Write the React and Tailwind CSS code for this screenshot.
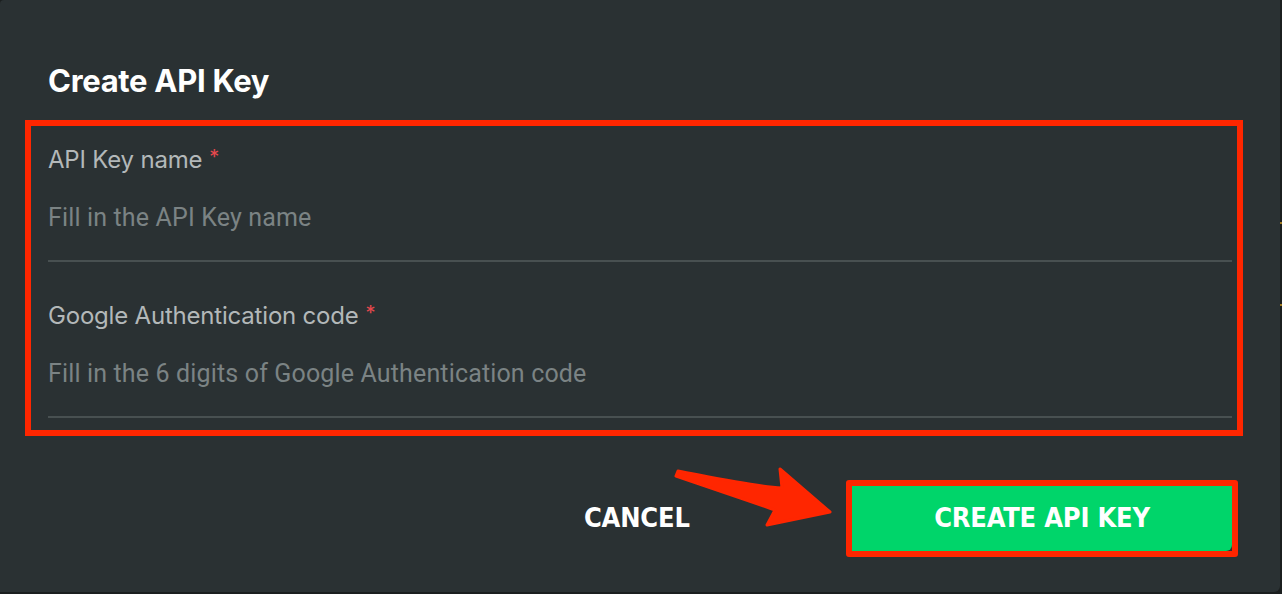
import React from 'react';

const Field = ({ label, placeholder, first }) => (
  <div className={first ? 'pt-[22px]' : 'pt-[42px]'}>
    <div className="flex h-[24px] items-center text-[24px] text-[#b3b8b9] font-['Inter',sans-serif] tracking-[-0.2px]">
      {label}
      <span className="ml-[7px] text-[#e5484d] text-[20px] self-start leading-[18px]">*</span>
    </div>
    <div className="mt-[34px] h-[24px] flex items-center text-[25px] text-[#7b8384] font-['Roboto',sans-serif] tracking-[0.15px]">
      {placeholder}
    </div>
    <div className="mt-[30px] h-[2px] bg-[#485051]" />
  </div>
);

const Arrow = () => (
  <svg width="170" height="70" viewBox="0 0 170 70" className="absolute left-[670px] top-[462px]">
    <path
      d="M8 9 C 40 15, 80 24, 112 26 L 110 7 L 160 50 L 97 63 L 105 48 C 70 36, 30 22, 6 14 Z"
      fill="#ff2600"
      stroke="#ff2600"
      strokeWidth="3"
      strokeLinejoin="round"
    />
  </svg>
);

export default function App() {
  return (
    <div className="w-[1282px] h-[594px] bg-[#1b1f1f] overflow-hidden relative">
      <div className="w-[1280px] h-[592px] bg-[#2a3133] rounded-br-[6px] rounded-tl-[4px] flex flex-col">
        <h1 className="mt-[63px] ml-[48px] h-[36px] flex items-center text-[31px] font-bold text-white font-['Inter',sans-serif] tracking-[-0.3px]">
          Create API Key
        </h1>

        <div className="mt-[21px] ml-[25px] w-[1218px] h-[316px] border-[6px] border-[#ff2600] pl-[17px] pr-[5px]">
          <Field first label="API Key name" placeholder="Fill in the API Key name" />
          <Field label="Google Authentication code" placeholder="Fill in the 6 digits of Google Authentication code" />
        </div>

        <div className="mt-[44px] flex items-center">
          <button className="ml-[584px] w-[112px] text-left text-[27px] font-bold text-white font-['DejaVu_Sans_Condensed','DejaVu_Sans',sans-serif] tracking-[-0.2px]">
            CANCEL
          </button>
          <div className="ml-[150px] w-[392px] h-[77px] border-[6px] border-[#ff2600] rounded-[3px]">
            <button className="w-full h-full bg-[#00d56a] rounded-br-[6px] text-white text-[27px] font-bold font-['DejaVu_Sans_Condensed','DejaVu_Sans',sans-serif] tracking-[-0.2px]">
              CREATE API KEY
            </button>
          </div>
        </div>
      </div>
      <div className="absolute right-0 top-[222px] w-[2px] h-[2px] bg-[#a07a20]" />
      <div className="absolute right-0 top-[304px] w-[2px] h-[2px] bg-[#a07a20]" />
      <Arrow />
    </div>
  );
}
